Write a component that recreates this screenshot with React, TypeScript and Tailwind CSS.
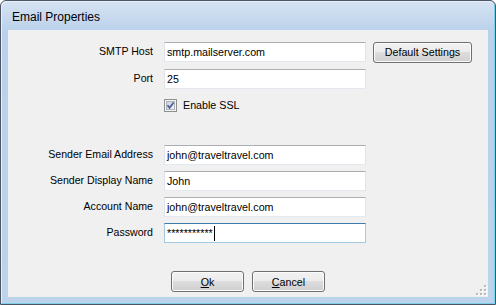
import React from "react";

const FONT = { fontFamily: '"Liberation Sans", Arial, sans-serif' };

function TextBox({ value, focused }: { value: string; focused?: boolean }) {
  return (
    <div
      className={
        "ml-[11px] flex h-[20px] w-[202px] items-center border bg-white pl-[2px] text-[10.7px] text-black " +
        (focused
          ? "border-[#a4c9e3] border-t-[#3d7bad]"
          : "border-[#e2e3ea] border-t-[#abadb3] border-b-[#e3e9ef]")
      }
    >
      {value}
      {focused && <span className="ml-[1px] h-[15px] w-[1px] bg-black" />}
    </div>
  );
}

function Row({
  label,
  value,
  focused,
  className = "",
  children,
}: {
  label: string;
  value: string;
  focused?: boolean;
  className?: string;
  children?: React.ReactNode;
}) {
  return (
    <div className={"flex items-start " + className}>
      <div className="flex h-[20px] w-[145px] items-center justify-end text-[10.6px] text-black">
        {label}
      </div>
      <TextBox value={value} focused={focused} />
      {children}
    </div>
  );
}

function Button({ children, className = "" }: { children: React.ReactNode; className?: string }) {
  return (
    <div
      className={
        "flex h-[21px] items-center justify-center rounded-[3px] border border-[#707070] bg-[linear-gradient(to_bottom,#f2f2f2_0%,#ebebeb_50%,#dddddd_50%,#cfcfcf_100%)] text-[10.7px] text-black shadow-[inset_0_0_0_1px_#fbfbfb] " +
        className
      }
    >
      {children}
    </div>
  );
}

function CheckBox() {
  return (
    <svg width="13" height="13" viewBox="0 0 13 13">
      <defs>
        <linearGradient id="cb" x1="0" y1="0" x2="1" y2="1">
          <stop offset="0" stopColor="#cbcfd5" />
          <stop offset="1" stopColor="#f6f6f6" />
        </linearGradient>
      </defs>
      <rect x="0.5" y="0.5" width="12" height="12" fill="#f4f4f4" stroke="#8e8f8f" />
      <rect x="2.5" y="2.5" width="8" height="8" fill="url(#cb)" stroke="#aeb3b9" />
      <path d="M3.5 6.3 L5.6 8.8 L9.6 3.4" fill="none" stroke="#4a5f97" strokeWidth="1.7" />
    </svg>
  );
}

function Grip() {
  const dots = [
    [9, 1],
    [9, 5],
    [5, 5],
    [9, 9],
    [5, 9],
    [1, 9],
  ];
  return (
    <svg width="12" height="12" viewBox="0 0 12 12" className="absolute bottom-[1px] right-[1px]">
      {dots.map(([x, y], i) => (
        <g key={i}>
          <rect x={x + 1} y={y + 1} width="2" height="2" fill="#ffffff" />
          <rect x={x} y={y} width="2" height="2" fill="#b9b9b9" />
        </g>
      ))}
    </svg>
  );
}

export default function App() {
  return (
    <div className="h-[305px] w-[496px] bg-white" style={FONT}>
      <div className="flex h-[305px] w-[496px] flex-col rounded-t-[6px] border border-[#4b5563] bg-[linear-gradient(to_bottom,#d6e3f3_0px,#bad1eb_30px,#bcd3ec_100%)] px-[7px] pb-[7px] shadow-[inset_-1px_-1px_0_#7fcfeb,inset_1px_1px_0_#e8f0f9]">
        <div className="-mx-[7px] flex h-[29px] items-center pl-[11px] pt-[3px] text-[12px] text-black">
          Email Properties
        </div>

        <div className="relative flex-1 bg-[#f0f0f0] pt-[12px]">
          <Row label="SMTP Host" value="smtp.mailserver.com">
            <Button className="ml-[7px] w-[99px]">Default Settings</Button>
          </Row>
          <Row label="Port" value="25" className="mt-[6px]" />

          <div className="mt-[8px] flex items-center pl-[156px]">
            <CheckBox />
            <span className="ml-[6px] text-[10.7px] text-black">Enable SSL</span>
          </div>

          <Row label="Sender Email Address" value="john@traveltravel.com" className="mt-[32px]" />
          <Row label="Sender Display Name" value="John" className="mt-[6px]" />
          <Row label="Account Name" value="john@traveltravel.com" className="mt-[6px]" />
          <Row label="Password" value="***********" focused className="mt-[6px]" />

          <div className="mt-[28px] flex gap-[8px] pl-[163px]">
            <Button className="w-[73px]">
              <span className="underline">O</span>k
            </Button>
            <Button className="w-[73px]">
              <span className="underline">C</span>ancel
            </Button>
          </div>

          <Grip />
        </div>
      </div>
    </div>
  );
}
